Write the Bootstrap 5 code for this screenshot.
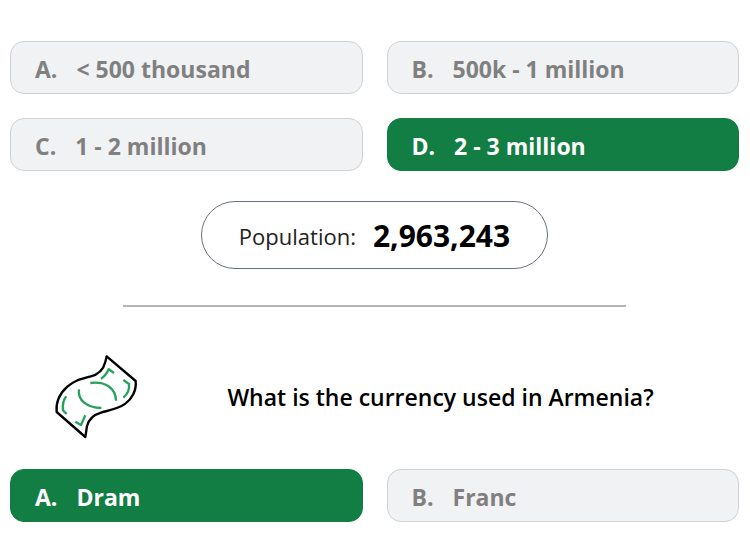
<!DOCTYPE html>
<html lang="en">
<head>
<meta charset="utf-8">
<meta name="viewport" content="width=device-width, initial-scale=1">
<title>Armenia quiz</title>
<link href="https://cdn.jsdelivr.net/npm/bootstrap@5.3.0/dist/css/bootstrap.min.css" rel="stylesheet">
<style>
body { font-family: "Open Sans", "Noto Sans", sans-serif; color: #000; background: #fff; }
.quiz { padding: 41px 11px 14px 10px; }
.answers { --bs-gutter-x: 24px; --bs-gutter-y: 24px; }
.answer { gap: 19px; padding: 10px 24px 6px; border: 1px solid #ced1d5; border-radius: 14px; background: #f1f2f4; color: #808080; font-size: 23px; font-weight: 700; line-height: 35px; text-align: left; }
.answer:hover { background: #e9ebee; color: #707070; }
.answer.correct { background: #127e43; border-color: #127e43; color: #fff; }
.fact { gap: 17px; margin-top: 30px; padding: 13px 37px 11px; border: 1px solid #67717d; line-height: 42px; }
.fact-label { font-size: 22px; font-weight: 400; color: #222; }
.fact-value { font-size: 30px; font-weight: 700; }
.divider { width: 69%; margin: 36px auto 38px; border-top: 2px solid #b5b5b5; opacity: 1; }
.question { padding: 0 8px 0 30px; margin-bottom: 24px; }
.question h2 { font-size: 23px; font-weight: 600; line-height: 32px; padding-top: 4px; }
</style>
<script src="https://cdn.jsdelivr.net/npm/bootstrap@5.3.0/dist/js/bootstrap.bundle.min.js"></script>
</head>
<body>
<main class="quiz container-fluid">
  <div class="answers row row-cols-2">
    <div class="col"><button type="button" class="answer d-flex w-100"><span>A.</span><span>&lt; 500 thousand</span></button></div>
    <div class="col"><button type="button" class="answer d-flex w-100"><span>B.</span><span>500k - 1 million</span></button></div>
    <div class="col"><button type="button" class="answer d-flex w-100"><span>C.</span><span>1 - 2 million</span></button></div>
    <div class="col"><button type="button" class="answer correct d-flex w-100"><span>D.</span><span>2 - 3 million</span></button></div>
  </div>
  <div class="d-flex justify-content-center">
    <div class="fact d-flex align-items-center rounded-pill"><span class="fact-label">Population:</span><span class="fact-value">2,963,243</span></div>
  </div>
  <hr class="divider">
  <section class="question d-flex align-items-center">
    <svg class="flex-shrink-0" width="110" height="100" viewBox="0 0 330 300" fill="none" stroke-width="7" stroke-linecap="round" stroke-linejoin="round" aria-hidden="true">
      <path stroke="#000" d="M200 34 287 108C290 136 276 162 256 176C236 191 215 194 185 202C158 210 146 223 141 243L136 276 50 201C47 172 61 144 82 125C104 106 121 103 150 95C177 88 191 72 196 50Z"/>
      <path stroke="#27a25c" stroke-linecap="butt" d="M151 114C195 108 227 129 228 167M117 133C112 166 141 188 184 189M183 101C192 96 200 86 206 73L222 84M250 105 267 117C269 134 262 148 250 158M79 154C70 164 67 177 69 196L80 207M136 211 123 240 106 230"/>
    </svg>
    <h2 class="flex-grow-1 text-center mb-0">What is the currency used in Armenia?</h2>
  </section>
  <div class="answers row row-cols-2">
    <div class="col"><button type="button" class="answer correct d-flex w-100"><span>A.</span><span>Dram</span></button></div>
    <div class="col"><button type="button" class="answer d-flex w-100"><span>B.</span><span>Franc</span></button></div>
  </div>
</main>
</body>
</html>
